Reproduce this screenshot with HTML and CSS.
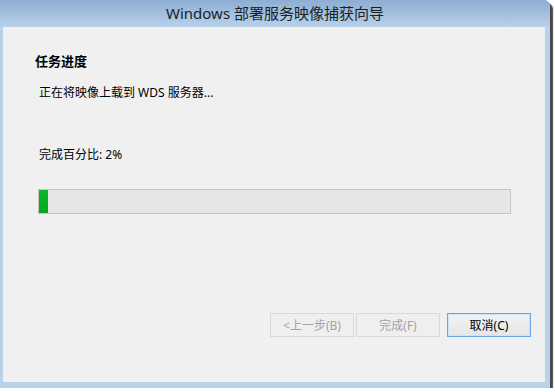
FILE: index.html
```html
<!DOCTYPE html>
<html lang="zh-CN">
    <head>
        <meta charset="UTF-8" />
        <meta name="viewport" content="width=device-width, initial-scale=1.0" />
        <title>Windows 部署服务映像捕获向导</title>
        <link rel="stylesheet" href="styles.css">
    </head>
    <body>
        <div class="window">
            <div class="titlebar">Windows 部署服务映像捕获向导</div>
            <div class="content">
                <div class="page">
                    <h1>任务进度</h1>
                    <p class="status">正在将映像上载到 WDS 服务器...</p>
                    <p class="percent">完成百分比: <span id="pct">2%</span></p>
                    <div class="progress">
                        <div class="progress-fill" style="width: 2%"></div>
                    </div>
                </div>
                <!-- Wizard buttons -->
                <div class="buttons">
                    <button class="btn" disabled>&lt;上一步(B)</button>
                    <button class="btn btn-finish" disabled>完成(F)</button>
                    <button class="btn btn-default">取消(C)</button>
                </div>
            </div>
        </div>
    </body>
</html>
```

FILE: styles.css
```css
body {
    font-family: "Noto Sans", "Noto Sans CJK SC", sans-serif;
    margin: 0;
    padding: 0;
    background-color: #fff;
}
.window {
    width: 550px;
    height: 388px;
    box-sizing: border-box;
    padding: 0 5px 6px 3px;
    background-color: #b9d1ea;
    border-top-right-radius: 6px;
    box-shadow: 3px 3px 1px rgba(40, 40, 40, 0.85);
    display: flex;
    flex-direction: column;
}
.titlebar {
    height: 27px;
    line-height: 26px;
    margin: 0 -5px 0 -3px;
    text-align: center;
    font-size: 15px;
    color: #1e1e1e;
    background: linear-gradient(#8dadd2, #b9d1ea);
    border-top-right-radius: 6px;
}
.content {
    flex: 1;
    background-color: #f0f0f0;
    display: flex;
    flex-direction: column;
    font-size: 12px;
    color: #000;
}
.page {
    padding-left: 32px;
}
h1 {
    margin: 25px 0 0 0;
    font-size: 13px;
    line-height: 18px;
    font-weight: bold;
}
p {
    margin: 0;
    line-height: 18px;
}
.status {
    margin: 14px 0 0 4px;
}
.percent {
    margin: 44px 0 0 4px;
}
.progress {
    width: 473px;
    height: 25px;
    margin: 25px 0 0 3px;
    box-sizing: border-box;
    border: 1px solid #c4c4c4;
    background-color: #e6e6e6;
}
.progress-fill {
    height: 100%;
    min-width: 9px;
    background: linear-gradient(#0ab62c, #06b025 50%, #05a521);
}
.buttons {
    margin-top: auto;
    display: flex;
    justify-content: flex-end;
    padding: 0 14px 45px 0;
}
.btn {
    width: 84px;
    height: 24px;
    margin-left: 2px;
    padding: 0;
    font-family: "Noto Sans", "Noto Sans CJK SC", sans-serif;
    font-size: 12px;
    border: 1px solid #d9d9d9;
    background-color: #efefef;
    color: #a3a3a3;
}
.btn-default {
    margin-left: 7px;
    color: #000;
    border: 1px solid #6aa7e8;
    box-shadow: inset 0 0 0 1px #cde3f8;
    background: linear-gradient(#f2f2f2, #e6e6e6);
}
```
